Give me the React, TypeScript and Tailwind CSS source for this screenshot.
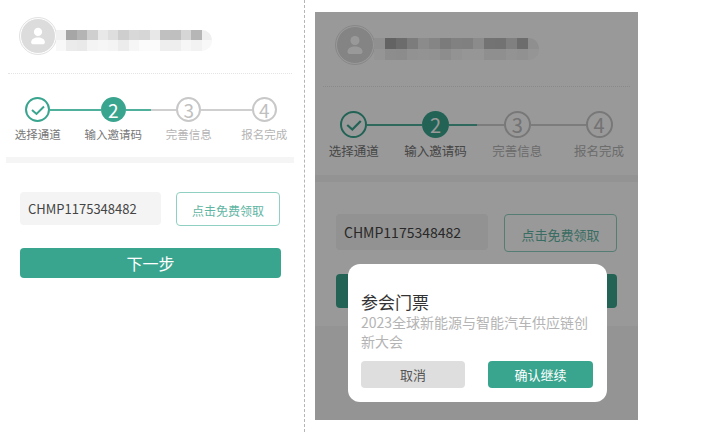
const rowA = ["#f1f1f1", "#a6a6a6", "#b4b4b4", "#cfcfcf", "#e8e8e8", "#dedede", "#cecece", "#d8d8d8", "#d6d6d6", "#e8e8e8", "#c0c0c0", "#bfbfbf", "#d6d6d6", "#b6b6b6", "#efefef"];
const rowB = ["#f8f8f8", "#ebebeb", "#e9e9e9", "#f4f4f4", "#f6f6f6", "#f4f4f4", "#ececec", "#f6f6f6", "#fbfbfb", "#fbfbfb", "#eeeeee", "#eeeeee", "#f6f6f6", "#f2f2f2", "#f8f8f8"];

const small = {
	wrap: "w-[300px] h-[432px]",
	head: "pl-5 pt-[18px]",
	avatar: "w-9 h-9",
	person: 22,
	mosaic: "w-[156px] mt-2",
	cell: "h-[10.5px]",
	dots: "mx-2 mt-[19px]",
	steps: "mt-[23px] w-[302px]",
	circle: "w-[25px] h-[25px]",
	digit: "text-[19px]",
	check: 16,
	label: "text-[11.5px] mt-[3px] leading-[18px]",
	band: "mx-1.5 mt-[14px] h-1.5",
	form: "mt-[29px] px-5",
	input: "w-[141px] h-[33px] pl-2 text-[13px]",
	claim: "w-[104px] h-[34px] ml-[15px] text-xs pt-1",
	next: "w-[261px] h-[30px] mt-[22px] text-base",
};

const big = {
	wrap: "w-[323px] h-[408px]",
	head: "pl-[21px] pt-[14px]",
	avatar: "w-[38px] h-[38px]",
	person: 24,
	mosaic: "w-[165px] mt-2",
	cell: "h-[11px]",
	dots: "mx-2 mt-[22px]",
	steps: "mt-[24px] w-[327px] -ml-0.5",
	circle: "w-[27px] h-[27px]",
	digit: "text-xl",
	check: 18,
	label: "text-[12.5px] mt-[3px] leading-[19px]",
	band: "mt-[15px] h-[7px]",
	form: "mt-8 px-[21px]",
	input: "w-[152px] h-9 pl-2 text-sm",
	claim: "w-[113px] h-[38px] ml-4 text-[13px] pt-1",
	next: "w-[281px] h-[34px] mt-[22px] text-base",
};

type Size = typeof small;

const names = ["选择通道", "输入邀请码", "完善信息", "报名完成"];

function Step({ index, size }: { index: number; size: Size }) {
	const done = index === 0;
	const current = index === 1;
	return (
		<div className="flex-1 flex flex-col items-center">
			<div className="w-full flex items-center">
				<div className={index === 0 ? "flex-1 h-0.5" : index === 1 ? "flex-1 h-0.5 bg-[#4fb09c]" : "flex-1 h-0.5 bg-[#cfcfcf]"} />
				<div
					className={
						done
							? `${size.circle} rounded-full border-2 border-[#3aa58f] flex items-center justify-center`
							: current
								? `${size.circle} rounded-full bg-[#3aa58f] text-white flex items-center justify-center`
								: `${size.circle} rounded-full border-2 border-[#c8c8c8] text-[#c0c0c0] flex items-center justify-center`
					}
				>
					{done ? (
						<svg width={size.check} height={size.check} viewBox="0 0 16 16" fill="none" stroke="#3aa58f" strokeWidth="2">
							<path d="M2 8 L6.5 12 L14 4.5" />
						</svg>
					) : (
						<span className={`${size.digit} leading-none`}>{index + 1}</span>
					)}
				</div>
				<div className={index === 3 ? "flex-1 h-0.5" : index === 0 || index === 1 ? "flex-1 h-0.5 bg-[#4fb09c]" : "flex-1 h-0.5 bg-[#cfcfcf]"} />
			</div>
			<div className={index < 2 ? `${size.label} text-[#777777]` : `${size.label} text-[#b4b4b4]`}>{names[index]}</div>
		</div>
	);
}

function Page({ size }: { size: Size }) {
	return (
		<div className="relative">
			<div className={`${size.head} flex items-center`}>
				<div className={`${size.avatar} shrink-0 rounded-full bg-[#dcdcdc] border border-white outline outline-[#e2e2e2] flex items-center justify-center`}>
					<svg width={size.person} height={size.person} viewBox="0 0 24 24" fill="#ffffff">
						<circle cx="12" cy="7.5" r="4.5" />
						<path d="M4.5 19 C4.5 15 8 13.5 12 13.5 C16 13.5 19.5 15 19.5 19 C19.5 20.5 18 21 17 21 L7 21 C6 21 4.5 20.5 4.5 19 Z" />
					</svg>
				</div>
				<div className={`${size.mosaic} rounded-r-[10px] overflow-hidden blur-[0.6px]`}>
					<div className="flex">
						{rowA.map((c, i) => (
							<div key={i} className={`${size.cell} flex-1`} style={{ backgroundColor: c }} />
						))}
					</div>
					<div className="flex">
						{rowB.map((c, i) => (
							<div key={i} className={`${size.cell} flex-1`} style={{ backgroundColor: c }} />
						))}
					</div>
				</div>
			</div>
			<div className={`${size.dots} border-b border-dotted border-[#e4e4e4]`} />
			<div className={`${size.steps} flex`}>
				{names.map((_, i) => (
					<Step key={i} index={i} size={size} />
				))}
			</div>
			<div className={`${size.band} bg-[#f5f5f5]`} />
			<div className={`${size.form} flex flex-col`}>
				<div className="flex items-start">
					<div className={`${size.input} rounded bg-[#f4f4f4] text-[#444444] flex items-center`}>CHMP1175348482</div>
					<div className={`${size.claim} rounded border border-[#8fd0c2] text-[#5fb5a3] flex items-center justify-center`}>点击免费领取</div>
				</div>
				<div className={`${size.next} rounded bg-[#3aa58f] text-white flex items-center justify-center`}>下一步</div>
			</div>
		</div>
	);
}

export default function App() {
	return (
		<div className="w-[703px] h-[432px] bg-white flex overflow-hidden font-['Noto_Sans_CJK_SC','Microsoft_YaHei',sans-serif]">
			<div className={small.wrap}>
				<Page size={small} />
			</div>
			<div className="ml-1 h-full border-l border-dashed border-[#b5b5b5]" />
			<div className="ml-2.5 mt-3">
				<div className={`${big.wrap} relative overflow-hidden bg-white`}>
					<Page size={big} />
					<div className="absolute left-0 right-0 bottom-0 h-[94px] bg-[#f7f7f7]" />
					<div className="absolute inset-0 bg-black/40" />
					<div className="absolute left-[33px] top-[252px] w-[259px] h-[138px] rounded-xl bg-white pl-[13px] pr-[14px] pt-[27px] flex flex-col">
						<div className="text-[17px] leading-[22px] text-[#333333]">参会门票</div>
						<div className="text-sm leading-[19px] text-[#b4b4b4]">2023全球新能源与智能汽车供应链创新大会</div>
						<div className="mt-[10px] flex justify-between">
							<div className="w-[104px] h-[27px] rounded bg-[#dedede] text-[13px] text-[#555555] flex items-center justify-center">取消</div>
							<div className="w-[105px] h-[27px] rounded bg-[#3aa58f] text-[13px] text-white flex items-center justify-center">确认继续</div>
						</div>
					</div>
				</div>
			</div>
		</div>
	);
}
